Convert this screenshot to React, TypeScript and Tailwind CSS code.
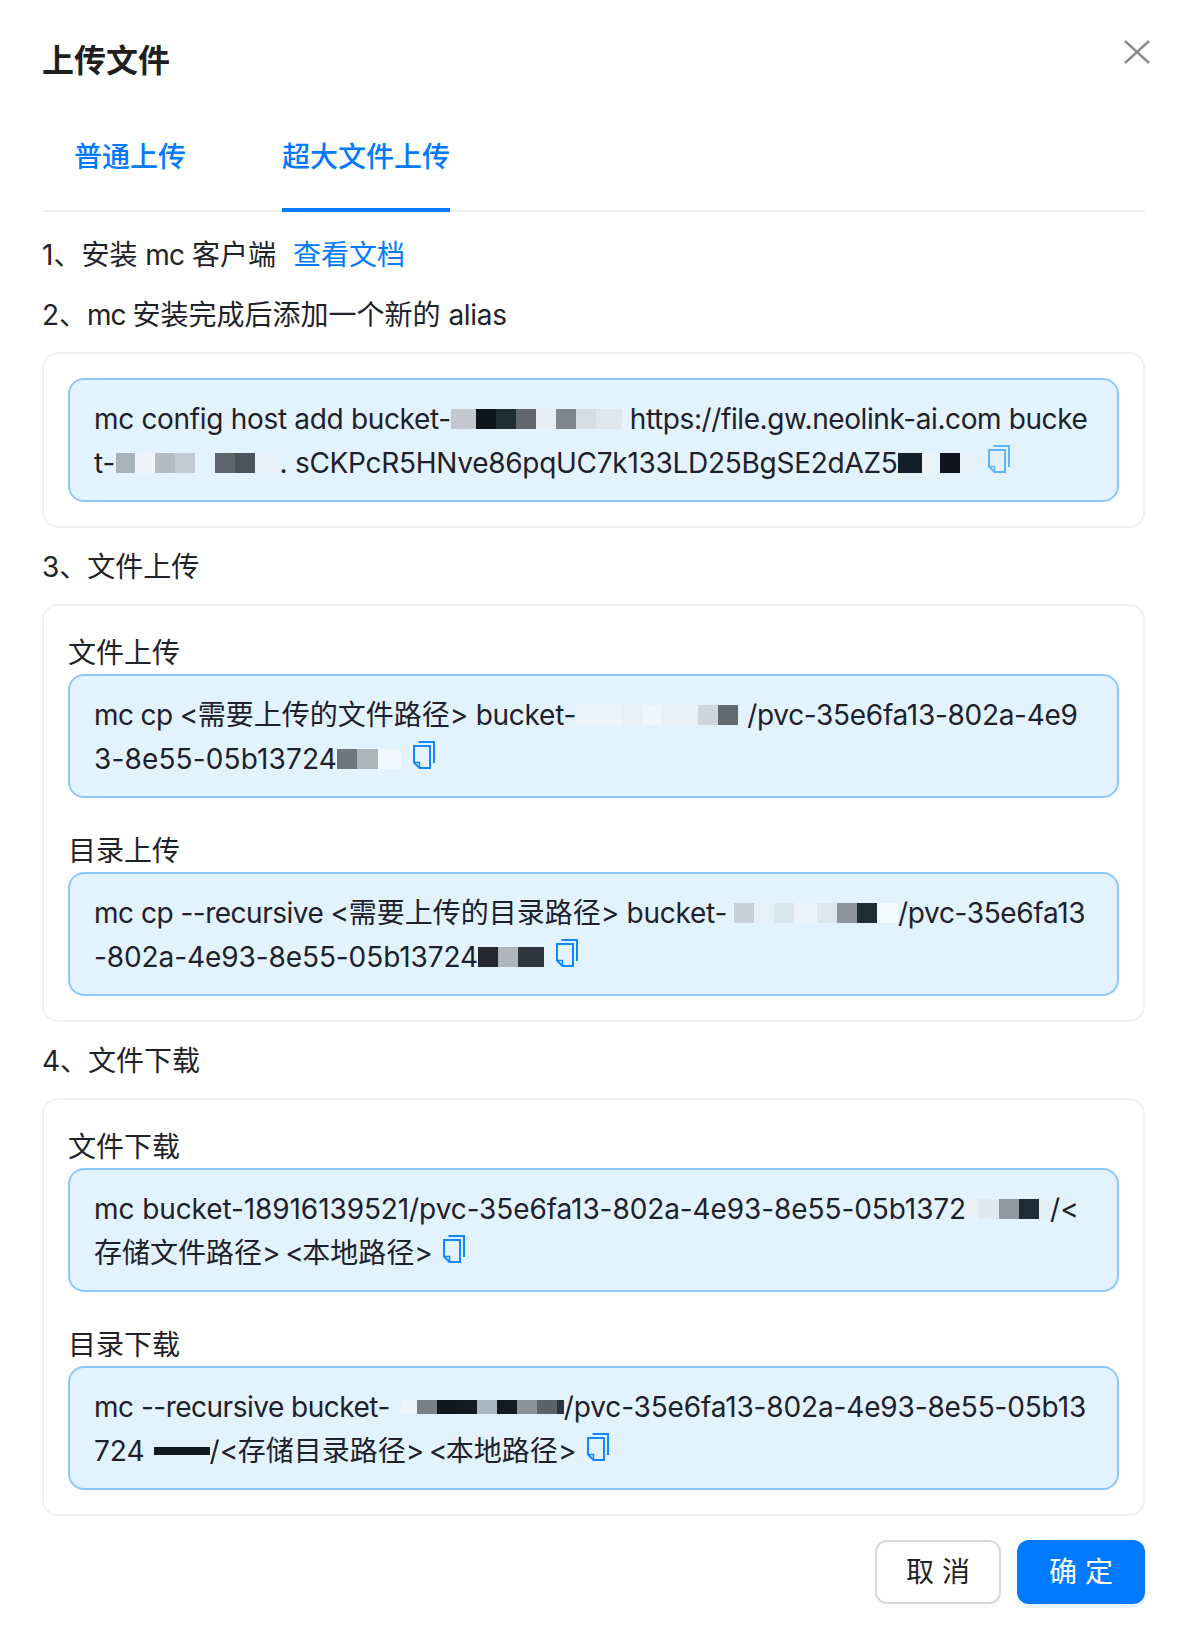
import React from "react";

type Cell = [number, string];
const BG = "#e3f2ff";

function Mosaic({ cells, h = 20 }: { cells: Cell[]; h?: number }) {
  return (
    <span className="inline-flex align-middle -mt-[4px]">
      {cells.map(([w, c], i) => (
        <span key={i} className="inline-block" style={{ width: w, height: h, backgroundColor: c }} />
      ))}
    </span>
  );
}

function CopyIcon({ light }: { light?: boolean }) {
  return (
    <svg
      viewBox="0 0 22 28"
      className={`inline-block align-baseline ml-[12px] w-[22px] h-[28px] ${light ? "text-[#63b3ff]" : "text-[#1188ff]"}`}
      fill="none"
      stroke="currentColor"
      strokeWidth="2"
    >
      <path d="M5.5 1H21V22" />
      <path d="M1 5H17V27H6.5L1 21.5Z" />
      <path d="M1 21.5H6.5V27" strokeWidth="1.5" />
    </svg>
  );
}

function Line({ children }: { children: React.ReactNode }) {
  return <div className="h-[44px] pt-[1px]">{children}</div>;
}

function Box({ children }: { children: React.ReactNode }) {
  return (
    <div className="border-2 border-[#8cc8ff] bg-[#e3f2ff] rounded-[16px] px-[24px] py-[16px] text-[#1d2129] whitespace-nowrap">
      {children}
    </div>
  );
}

function Card({ children }: { children: React.ReactNode }) {
  return <div className="border-2 border-[#f0f0f0] rounded-[16px] p-[24px]">{children}</div>;
}

function Step({ children }: { children: React.ReactNode }) {
  return <div className="my-[16px] h-[44px] pt-[1px]">{children}</div>;
}

export default function App() {
  return (
    <div className="w-[1184px] h-[1638px] bg-white pl-[42px] pr-[39px] pt-[37px] font-[Inter,'Noto_Sans_CJK_SC',sans-serif] text-[28px] leading-[44px] text-[#1f2329] overflow-hidden">
      <div className="flex items-start justify-between h-[47px]">
        <h1 className="text-[32px] leading-[48px] font-semibold text-[#1f1f1f]">上传文件</h1>
        <svg viewBox="0 0 26 24" className="w-[26px] h-[24px] mt-[3px] -mr-[5px] text-[#8c8c8c]" fill="none" stroke="currentColor" strokeWidth="2.4">
          <path d="M1 1L25 23M25 1L1 23" />
        </svg>
      </div>

      <div className="flex mt-[26px] h-[102px] border-b-2 border-[#f0f0f0] text-[#007aff] font-medium">
        <div className="ml-[32px] h-[102px] pt-[25px]">普通上传</div>
        <div className="ml-[96px] h-[102px] pt-[25px] border-b-4 border-[#007aff]">超大文件上传</div>
      </div>

      <div className="mt-[20px] h-[44px] pt-[1px]">
        1、安装 <span className="tracking-[-0.8px]">mc</span> 客户端<span className="ml-[17px] text-[#007aff]">查看文档</span>
      </div>
      <Step>
        2、<span className="tracking-[-1px]">mc </span>安装完成后添加一个新的 <span className="tracking-[-0.3px]">alias</span>
      </Step>

      <Card>
        <Box>
          <Line>
            <span className="tracking-[-0.32px]">mc config host add bucket-</span>
            <Mosaic cells={[[25, "#c3c8d0"], [20, "#0e1519"], [20, "#202d35"], [20, "#62676f"], [20, "#e8eef5"], [20, "#7f858e"], [20, "#d5dde5"], [26, "#dfe7ec"]]} />{" "}
            <span className="tracking-[-0.4px]">https://file.gw.neolink-ai.com bucke</span>
          </Line>
          <Line>
            t-
            <Mosaic cells={[[19, "#a8b2ba"], [20, "#eef4fa"], [20, "#b5bcc5"], [20, "#c3cad3"], [20, BG], [20, "#5f656e"], [20, "#4d545e"], [25, "#e8f0f8"]]} />
            <span className="tracking-[-0.28px]">. sCKPcR5HNve86pqUC7k133LD25BgSE2dAZ5</span>
            <Mosaic cells={[[24, "#13202a"], [14, "#eef3f8"], [4, BG], [20, "#10151c"], [16, "#e8eff5"]]} />
            <CopyIcon light />
          </Line>
        </Box>
      </Card>

      <Step>3、文件上传</Step>

      <Card>
        <Line>文件上传</Line>
        <Box>
          <Line>
            <span className="tracking-[-0.6px]">mc cp &lt;</span>需要上传的文件路径<span className="tracking-[-0.25px]">&gt; bucket-</span>
            <Mosaic cells={[[46, "#eef3f8"], [20, "#e8eff6"], [20, "#f0f5fa"], [36, "#e8eff6"], [20, "#d0d5da"], [20, "#63686f"], [9, BG]]} />
            <span className="tracking-[-0.3px]">/pvc-35e6fa13-802a-4e9</span>
          </Line>
          <Line>
            <span className="tracking-[0.14px]">3-8e55-05b13724</span>
            <Mosaic cells={[[20, "#6e7780"], [21, "#aab5bc"], [23, "#f2f9fc"]]} />
            <CopyIcon />
          </Line>
        </Box>
        <div className="mt-[30px] h-[44px] pt-[1px]">目录上传</div>
        <Box>
          <Line>
            <span className="tracking-[-0.5px]">mc cp --recursive &lt;</span>需要上传的目录路径<span className="tracking-[-0.25px]">&gt; bucket-</span>
            <Mosaic cells={[[7, BG], [20, "#c6d0d8"], [20, "#e6f0f8"], [20, "#d8e6f0"], [23, "#eaf3fa"], [20, "#dce8f0"], [20, "#8c949c"], [20, "#1e2c36"], [21, "#f4fbff"]]} />
            <span className="tracking-[-0.35px]">/pvc-35e6fa13</span>
          </Line>
          <Line>
            <span className="tracking-[-0.09px]">-802a-4e93-8e55-05b13724</span>
            <Mosaic cells={[[20, "#24282c"], [20, "#aeb6bd"], [26, "#2f3640"]]} />
            <CopyIcon />
          </Line>
        </Box>
      </Card>

      <Step>4、文件下载</Step>

      <Card>
        <Line>文件下载</Line>
        <Box>
          <Line>
            <span className="tracking-[-0.09px]">mc bucket-18916139521/pvc-35e6fa13-802a-4e93-8e55-05b1372</span>
            <Mosaic cells={[[12, "#e9f1f7"], [21, "#dfe9f0"], [20, "#8f989f"], [20, "#1e2c36"], [11, "#e6eef4"]]} />
            /&lt;
          </Line>
          <Line>
            存储文件路径<span className="tracking-[-1.6px]">&gt; &lt;</span>本地路径<span className="tracking-[-1.6px]">&gt;</span>
            <CopyIcon />
          </Line>
        </Box>
        <div className="mt-[30px] h-[44px] pt-[1px]">目录下载</div>
        <Box>
          <Line>
            <span className="tracking-[-0.5px]">mc --recursive bucket-</span>
            <Mosaic h={14} cells={[[11, BG], [16, "#eef4fa"], [20, "#7a8087"], [20, "#10181f"], [20, "#111a22"], [20, "#abb7c0"], [20, "#121a22"], [20, "#8a9199"], [20, "#5b6269"], [7, "#2c343c"]]} />
            <span className="tracking-[-0.15px]">/pvc-35e6fa13-802a-4e93-8e55-05b13</span>
          </Line>
          <Line>
            724
            <Mosaic h={8} cells={[[9, BG], [56, "#11181f"]]} />
            /<span className="tracking-[-0.5px]">&lt;</span>存储目录路径<span className="tracking-[-1.6px]">&gt; &lt;</span>本地路径<span className="tracking-[-1.6px]">&gt;</span>
            <CopyIcon />
          </Line>
        </Box>
      </Card>

      <div className="flex justify-end gap-[16px] mt-[24px]">
        <button className="w-[126px] h-[64px] rounded-[12px] border-2 border-[#d9d9d9] bg-white shadow-[0_4px_0_rgba(0,0,0,0.02)] text-[#1f2329]">取 消</button>
        <button className="w-[128px] h-[64px] rounded-[12px] bg-[#007aff] text-white shadow-[0_4px_0_rgba(5,145,255,0.1)]">确 定</button>
      </div>
    </div>
  );
}
